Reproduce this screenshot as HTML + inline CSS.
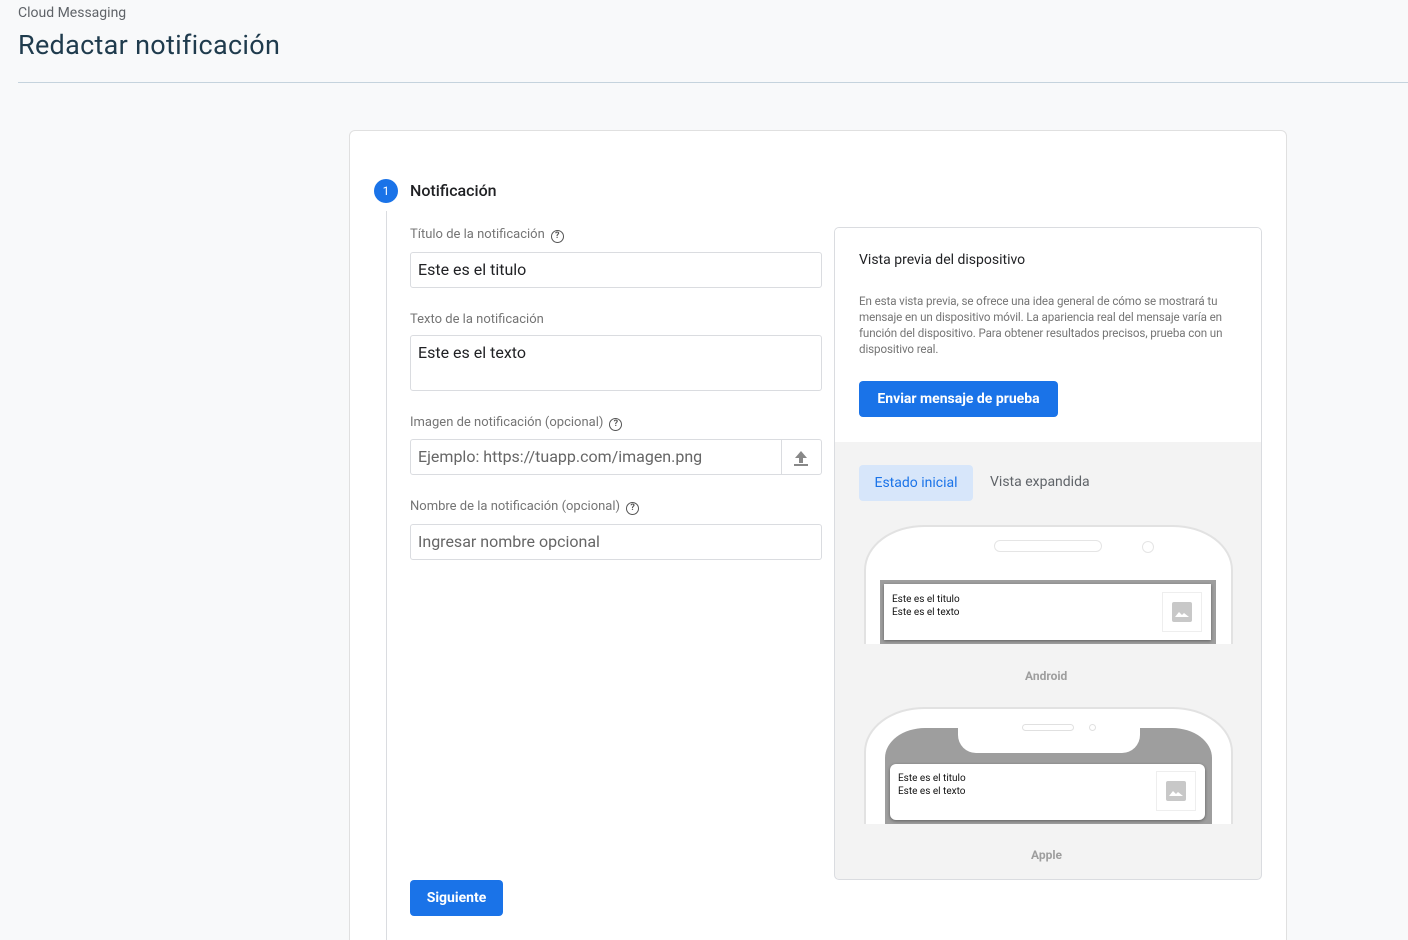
<!DOCTYPE html>
<html><head><meta charset="utf-8"><style>
*{box-sizing:border-box;margin:0;padding:0}
html,body{width:1408px;height:940px;overflow:hidden}
body{background:#f8f9fa;font-family:Roboto,"Liberation Sans",Arial,sans-serif;position:relative;color:#202124}
.abs{position:absolute}
.lbl{font-size:13px;color:#757575}
.inp{position:absolute;left:410px;width:412px;height:36px;border:1px solid #dadce0;border-radius:3px;background:#fff;font-size:16px;padding:7px 0 0 7px;color:#202124}
.help{display:inline-block;width:13px;height:13px;border:1.3px solid #555;border-radius:50%;font-size:9px;line-height:11px;text-align:center;color:#555;vertical-align:0px;margin-left:6px;font-weight:bold}
.btn{position:absolute;background:#1a73e8;color:#fff;font-weight:bold;font-size:14px;border-radius:4px;text-align:center}
.ntxt{font-size:10px;color:#111;line-height:13px}
.thumb{position:absolute;width:40px;height:40px;border:1px solid #eee;background:#fff}
</style></head><body>
<div class="abs" style="left:18px;top:5px;font-size:14px;color:#5f6368">Cloud Messaging</div>
<div class="abs" style="left:18px;top:29px;font-size:27px;color:#1f3b4d;letter-spacing:0.3px">Redactar notificación</div>
<div class="abs" style="left:18px;top:82px;width:1390px;height:1px;background:#c5d3dd"></div>

<div class="abs" style="left:349px;top:130px;width:938px;height:830px;background:#fff;border:1px solid #e0e0e0;border-radius:6px"></div>
<div class="abs" style="left:374px;top:179px;width:24px;height:24px;border-radius:50%;background:#1a73e8;color:#fff;font-size:12px;text-align:center;line-height:24px">1</div>
<div class="abs" style="left:410px;top:181px;font-size:16px;font-weight:500;color:#202124">Notificación</div>
<div class="abs" style="left:386px;top:211px;width:1px;height:729px;background:#dadce0"></div>

<div class="abs lbl" style="left:410px;top:227px">Título de la notificación<span class="help">?</span></div>
<div class="inp" style="top:252px">Este es el titulo</div>
<div class="abs lbl" style="left:410px;top:312px">Texto de la notificación</div>
<div class="inp" style="top:335px;height:56px;padding-top:7px">Este es el texto</div>
<div class="abs lbl" style="left:410px;top:415px">Imagen de notificación (opcional)<span class="help">?</span></div>
<div class="inp" style="top:439px;color:#666">Ejemplo: https://tuapp.com/imagen.png</div>
<div class="abs" style="left:781px;top:440px;width:1px;height:34px;background:#dadce0"></div>
<svg class="abs" style="left:793px;top:450px" width="16" height="16" viewBox="0 0 16 16"><path d="M8 1L2 8h4v5h4V8h4z" fill="#888"/><rect x="1" y="14" width="14" height="2" fill="#888"/></svg>
<div class="abs lbl" style="left:410px;top:499px">Nombre de la notificación (opcional)<span class="help">?</span></div>
<div class="inp" style="top:524px;color:#666">Ingresar nombre opcional</div>
<div class="btn" style="left:410px;top:880px;width:93px;height:36px;line-height:36px">Siguiente</div>

<div class="abs" style="left:834px;top:227px;width:428px;height:653px;border:1px solid #dadce0;border-radius:5px;background:#f3f3f3;overflow:hidden">
 <div style="height:214px;background:#fff"></div>
</div>
<div class="abs" style="left:859px;top:252px;font-size:14px;color:#202124">Vista previa del dispositivo</div>
<div class="abs" style="left:859px;top:293px;width:382px;font-size:11.6px;line-height:16px;color:#757575;letter-spacing:-0.1px">En esta vista previa, se ofrece una idea general de cómo se mostrará tu mensaje en un dispositivo móvil. La apariencia real del mensaje varía en función del dispositivo. Para obtener resultados precisos, prueba con un dispositivo real.</div>
<div class="btn" style="left:859px;top:381px;width:199px;height:36px;line-height:36px">Enviar mensaje de prueba</div>
<div class="abs" style="left:859px;top:465px;width:114px;height:36px;background:#d7e6fa;border-radius:4px;color:#1a73e8;font-size:14px;text-align:center;line-height:36px">Estado inicial</div>
<div class="abs" style="left:990px;top:474px;font-size:14px;color:#5f6368">Vista expandida</div>

<!-- Android -->
<div class="abs" style="left:864px;top:525px;width:369px;height:119px;overflow:hidden">
 <div style="position:absolute;left:0;top:0;width:369px;height:200px;border:2px solid #e2e2e2;border-radius:60px 60px 0 0/45px 45px 0 0;background:#fff"></div>
 <div style="position:absolute;left:130px;top:15px;width:108px;height:12px;border:1.5px solid #e5e5e5;border-radius:6px"></div>
 <div style="position:absolute;left:278px;top:16px;width:12px;height:12px;border:1.5px solid #e5e5e5;border-radius:50%"></div>
 <div style="position:absolute;left:16px;top:55px;width:336px;height:70px;background:#9e9e9e"></div>
 <div style="position:absolute;left:20px;top:59px;width:327px;height:56px;background:#fff;box-shadow:0 1px 3px rgba(0,0,0,.4)">
  <div class="ntxt" style="position:absolute;left:8px;top:9px">Este es el titulo<br>Este es el texto</div>
  <div class="thumb" style="left:278px;top:8px"><svg style="position:absolute;left:9px;top:9px" width="20" height="20" viewBox="0 0 20 20"><rect width="20" height="20" rx="2" fill="#c8c8c8"/><path d="M3 15l4-5 3 3 2-2 5 4z" fill="#fff"/></svg></div>
 </div>
</div>
<div class="abs" style="left:1025px;top:669px;font-size:12px;font-weight:bold;color:#9e9e9e">Android</div>

<!-- Apple -->
<div class="abs" style="left:864px;top:707px;width:369px;height:117px;overflow:hidden">
 <div style="position:absolute;left:0;top:0;width:369px;height:200px;border:2px solid #e2e2e2;border-radius:60px 60px 0 0/45px 45px 0 0;background:#fff"></div>
 <div style="position:absolute;left:21px;top:21px;width:327px;height:120px;background:#9e9e9e;border-radius:40px 40px 0 0/30px 30px 0 0"></div>
 <div style="position:absolute;left:94px;top:14px;width:182px;height:32px;background:#fff;border-radius:0 0 18px 18px"></div>
 <div style="position:absolute;left:158px;top:17px;width:52px;height:7px;border:1.3px solid #e0e0e0;border-radius:4px"></div>
 <div style="position:absolute;left:225px;top:17px;width:7px;height:7px;border:1.3px solid #e0e0e0;border-radius:50%"></div>
 <div style="position:absolute;left:26px;top:57px;width:315px;height:56px;background:#fff;border-radius:6px;box-shadow:0 1px 3px rgba(0,0,0,.4)">
  <div class="ntxt" style="position:absolute;left:8px;top:8px">Este es el titulo<br>Este es el texto</div>
  <div class="thumb" style="left:266px;top:7px"><svg style="position:absolute;left:9px;top:9px" width="20" height="20" viewBox="0 0 20 20"><rect width="20" height="20" rx="2" fill="#c8c8c8"/><path d="M3 15l4-5 3 3 2-2 5 4z" fill="#fff"/></svg></div>
 </div>
</div>
<div class="abs" style="left:1031px;top:848px;font-size:12px;font-weight:bold;color:#9e9e9e">Apple</div>
</body></html>
